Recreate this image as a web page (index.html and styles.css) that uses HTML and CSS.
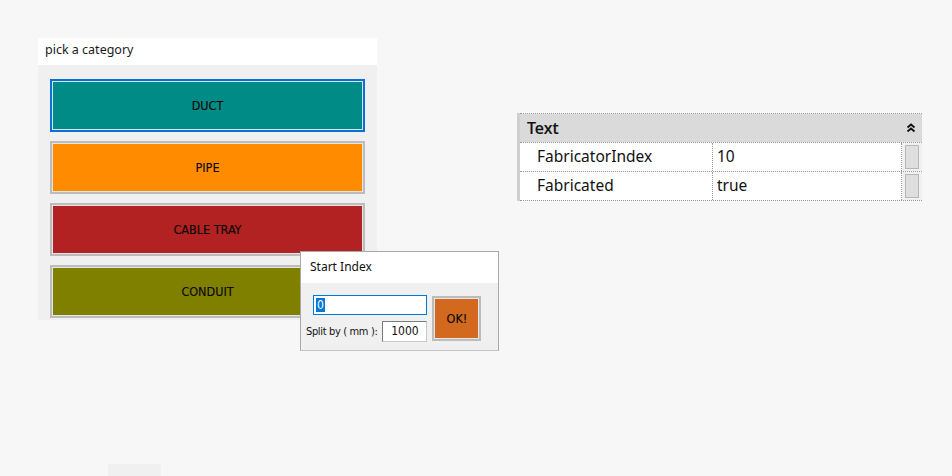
FILE: index.html
```html
<!DOCTYPE html>
<html>
<head>
<meta charset="utf-8">
<link rel="stylesheet" href="styles.css">
</head>
<body>
<div class="page">
  <div class="toprow">
    <div class="left-wrap">
      <div class="picker">
        <div class="picker-head">pick a category</div>
        <div class="picker-body">
          <div class="cat cat-duct focused"><span>DUCT</span></div>
          <div class="cat cat-pipe"><span>PIPE</span></div>
          <div class="cat cat-tray"><span>CABLE TRAY</span></div>
          <div class="cat cat-conduit"><span>CONDUIT</span></div>
        </div>
      </div>
      <div class="dialog">
        <div class="dialog-title">Start Index</div>
        <div class="dialog-body">
          <div class="dialog-fields">
            <div class="field-main"><span class="sel">0</span></div>
            <div class="split-row">
              <span class="split-label">Split by ( mm ):</span>
              <div class="field-split">1000</div>
            </div>
          </div>
          <div class="ok-btn"><span>OK!</span></div>
        </div>
      </div>
    </div>
    <div class="grid">
      <div class="grid-edge"></div>
      <div class="grid-main">
        <div class="g-head">
          <span class="g-head-label">Text</span>
          <svg class="chev" width="10" height="10" viewBox="0 0 10 10"><path d="M1.5 4.5 L5 1.5 L8.5 4.5 M1.5 8.5 L5 5.5 L8.5 8.5" fill="none" stroke="#111" stroke-width="1.8"/></svg>
        </div>
        <div class="g-row">
          <div class="g-name">FabricatorIndex</div>
          <div class="g-val">10</div>
          <div class="g-side"><div class="g-thumb"></div></div>
        </div>
        <div class="g-row">
          <div class="g-name">Fabricated</div>
          <div class="g-val">true</div>
          <div class="g-side"><div class="g-thumb"></div></div>
        </div>
      </div>
    </div>
  </div>
  <div class="stub"></div>
</div>
</body>
</html>
```

FILE: styles.css
```css
html, body {
  margin: 0;
  padding: 0;
  background: #f7f7f7;
  width: 952px;
  height: 476px;
  overflow: hidden;
}
.page {
  padding: 38px 0 0 38px;
  font-family: "Noto Sans", "Open Sans", sans-serif;
}
.toprow {
  display: flex;
  align-items: flex-start;
}
.left-wrap {
  position: relative;
  width: 339px;
}
.picker {
  width: 339px;
}
.picker-head {
  background: #ffffff;
  height: 27px;
  box-sizing: border-box;
  padding: 2px 0 0 7px;
  font-size: 12.5px;
  color: #1a1a1a;
  line-height: 19px;
}
.picker-body {
  background: #f0f0f0;
  padding: 14px 12px 2px 12px;
  display: flex;
  flex-direction: column;
  gap: 9px;
}
.cat {
  height: 53px;
  box-sizing: border-box;
  border: 2px solid #bcbcbc;
  box-shadow: inset 0 0 0 1px #e6e6e6;
  display: flex;
  align-items: center;
  justify-content: center;
  font-family: "DejaVu Sans Condensed", "DejaVu Sans", sans-serif;
  font-stretch: condensed;
  font-size: 12.5px;
  color: #0a0a0a;
  -webkit-text-stroke: 0.15px #0a0a0a;
}
.cat.focused {
  border-color: #0a6fd6;
  box-shadow: inset 0 0 0 1px #d8e6f2;
}
.cat-duct { background: #008b87; }
.cat-pipe { background: #ff8c00; }
.cat-tray { background: #b22222; }
.cat-conduit { background: #808000; }

.dialog {
  position: absolute;
  left: 262px;
  top: 213px;
  width: 199px;
  height: 100px;
  box-sizing: border-box;
  border: 1px solid #a8a8a8;
  border-bottom-color: #c4c4c4;
  background: #f0f0f0;
  display: flex;
  flex-direction: column;
}
.dialog-title {
  background: #ffffff;
  height: 31px;
  box-sizing: border-box;
  padding: 6px 0 0 9px;
  font-size: 12px;
  line-height: 18px;
  color: #111;
}
.dialog-body {
  display: flex;
  padding: 12px 0 0 5px;
  gap: 5px;
}
.dialog-fields {
  display: flex;
  flex-direction: column;
  gap: 6px;
}
.field-main {
  margin-left: 7px;
  width: 114px;
  height: 20px;
  box-sizing: border-box;
  border: 1px solid #0078d7;
  background: #fff;
  padding: 2px 0 0 2px;
  font-family: "DejaVu Sans Condensed", "DejaVu Sans", sans-serif;
  font-size: 12px;
  line-height: 14px;
}
.sel {
  background: #0078d7;
  color: #fff;
  padding: 0 1px;
}
.split-row {
  display: flex;
  align-items: center;
  gap: 5px;
}
.split-label {
  font-family: "DejaVu Sans Condensed", "DejaVu Sans", sans-serif;
  font-size: 11px;
  color: #111;
  letter-spacing: -0.35px;
}
.field-split {
  width: 45px;
  height: 21px;
  box-sizing: border-box;
  border: 1px solid #7a7a7a;
  border-right-color: #c8c8c8;
  border-bottom-color: #c8c8c8;
  background: #fff;
  font-family: "DejaVu Sans Condensed", "DejaVu Sans", sans-serif;
  font-size: 12px;
  line-height: 19px;
  text-align: center;
  color: #111;
}
.ok-btn {
  margin-top: 1px;
  width: 49px;
  height: 45px;
  box-sizing: border-box;
  border: 2px solid #bcbcbc;
  box-shadow: inset 0 0 0 1px #e6e6e6;
  background: #d2691e;
  display: flex;
  align-items: center;
  justify-content: center;
  font-family: "DejaVu Sans Condensed", "DejaVu Sans", sans-serif;
  font-size: 12.5px;
  color: #0a0a0a;
  -webkit-text-stroke: 0.15px #0a0a0a;
}

.grid {
  margin-left: 140px;
  margin-top: 75px;
  display: flex;
  width: 405px;
  background: #f7f7f7;
}
.grid-edge {
  width: 3px;
  background: #cfcfcf;
}
.grid-main {
  flex: 1;
  border-top: 1px dotted #9a9a9a;
}
.g-head {
  height: 28px;
  background: #dadada;
  display: flex;
  align-items: center;
  justify-content: space-between;
  padding: 0 6px 0 7px;
  font-size: 16px;
  color: #111;
}
.g-head-label {
  font-weight: 500;
  -webkit-text-stroke: 0.2px #111;
}
.chev { display: block; }
.g-row {
  display: flex;
  height: 28px;
  border-top: 1px dotted #9a9a9a;
  font-size: 15.5px;
  color: #111;
}
.g-row:last-child {
  border-bottom: 1px dotted #9a9a9a;
}
.g-name {
  width: 193px;
  box-sizing: border-box;
  background: #fff;
  padding-left: 17px;
  line-height: 27px;
  border-right: 1px dotted #9a9a9a;
}
.g-val {
  width: 189px;
  box-sizing: border-box;
  background: #fff;
  padding-left: 4px;
  line-height: 27px;
  border-right: 1px dotted #9a9a9a;
}
.g-side {
  flex: 1;
  background: #f0f0f0;
  display: flex;
  align-items: center;
  justify-content: center;
}
.g-thumb {
  width: 14px;
  height: 24px;
  box-sizing: border-box;
  border: 1px solid #b8b8b8;
  background: #dedede;
}
.stub {
  margin-top: 144px;
  margin-left: 70px;
  width: 53px;
  height: 12px;
  background: #f0f0f0;
}
```
